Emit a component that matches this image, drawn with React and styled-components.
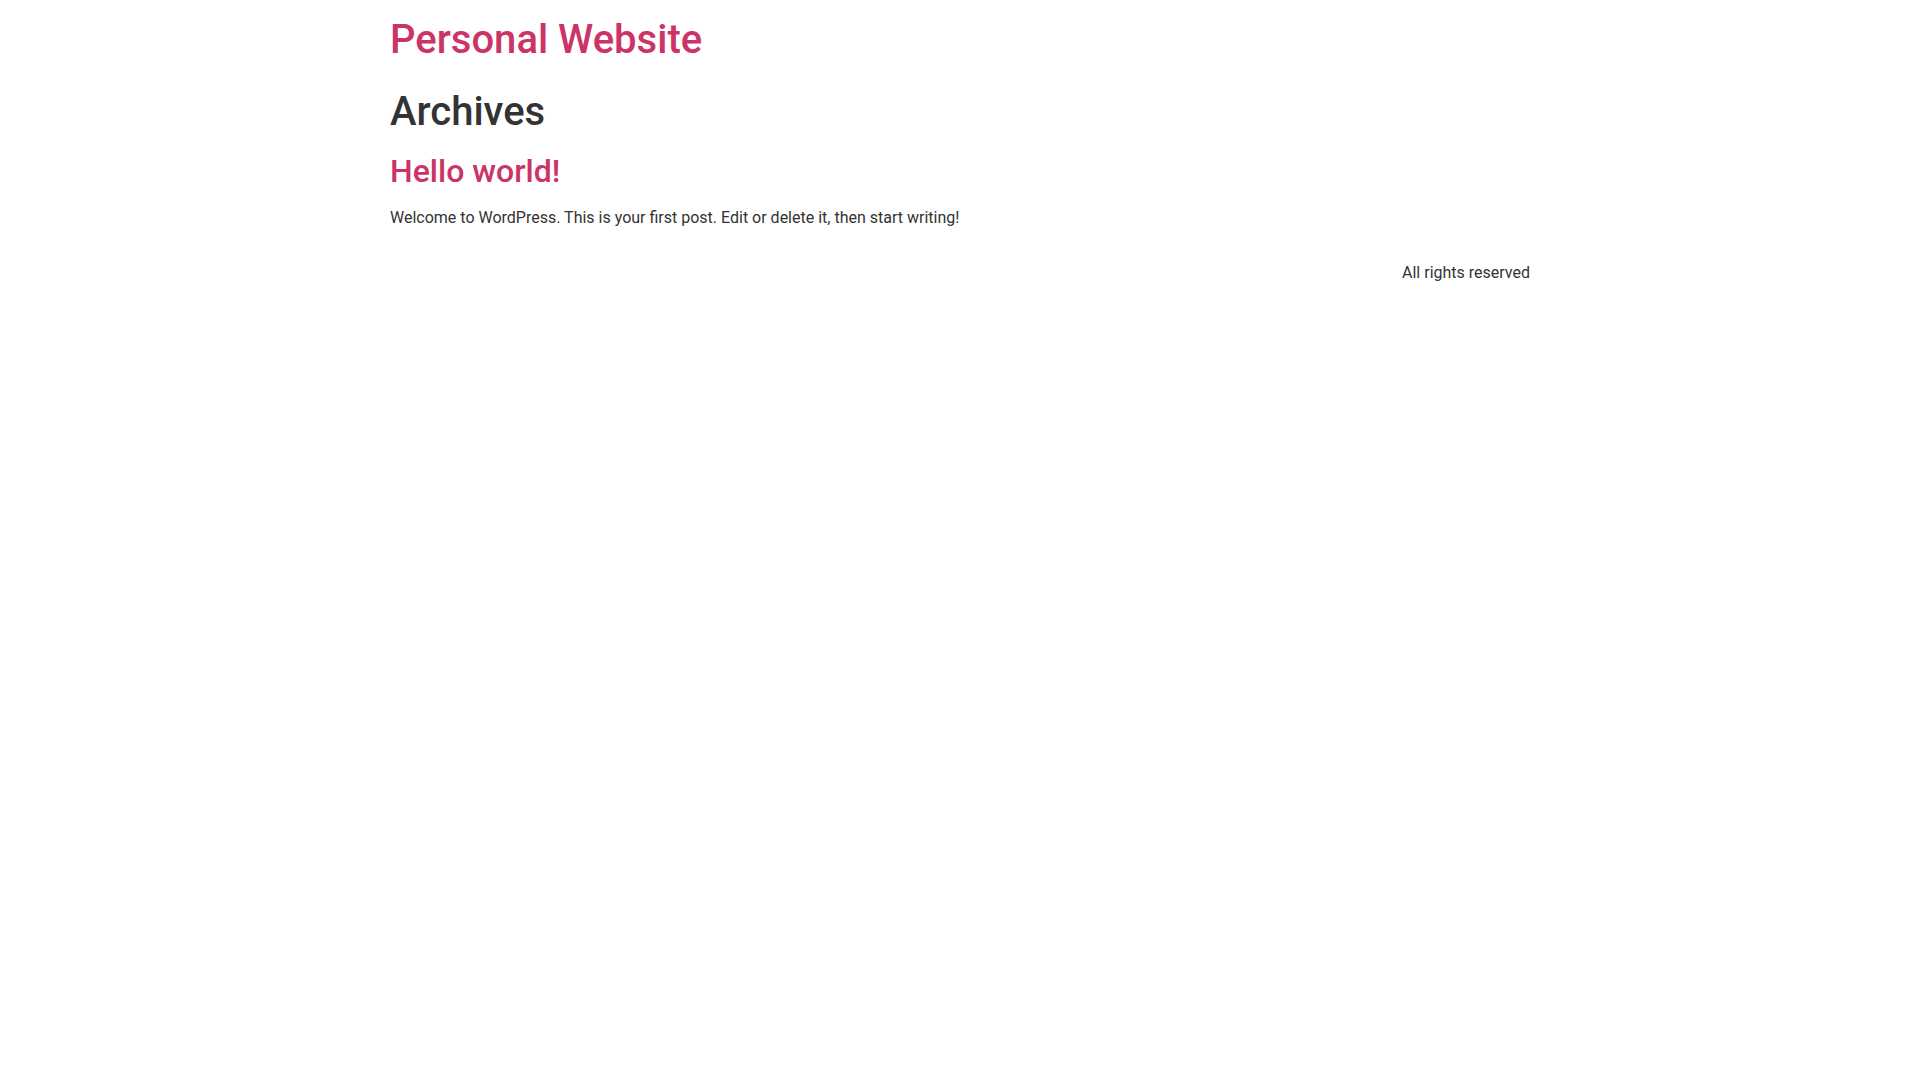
import React from "react";
import styled, { createGlobalStyle } from "styled-components";

const Global = createGlobalStyle`
  html, body { margin: 0; padding: 0; background: #fff; }
  body {
    font-family: Roboto, "Liberation Sans", sans-serif;
    font-size: 16px;
    line-height: 1.5;
    color: #333;
    -webkit-font-smoothing: antialiased;
  }
  * { box-sizing: border-box; }
`;

const Container = styled.div`
  max-width: 1140px;
  margin: 0 auto;
`;

const Header = styled.header`
  display: flex;
  justify-content: space-between;
  padding: 16px 0;
`;

const SiteTitle = styled.h1`
  margin: 0;
  font-size: 40px;
  font-weight: 500;
  line-height: 1.2;
  a { color: #c36; text-decoration: none; }
`;

const Main = styled.main``;

const PageTitle = styled.h1`
  margin: 8px 0 16px;
  font-size: 40px;
  font-weight: 500;
  line-height: 1.2;
  color: #333;
`;

const Article = styled.article``;

const PostTitle = styled.h2`
  margin: 16px 0 16px;
  font-size: 32px;
  font-weight: 500;
  line-height: 1.2;
  a { color: #c36; text-decoration: none; }
`;

const Excerpt = styled.p`
  margin: 0 0 14.4px;
`;

const Footer = styled.footer`
  display: flex;
  justify-content: flex-end;
  padding: 16px 0;
`;

const Copyright = styled.p`
  margin: 0;
`;

export default function App() {
  return (
    <>
      <Global />
      <Container>
        <Header>
          <SiteTitle>
            <a href="#">Personal Website</a>
          </SiteTitle>
        </Header>
        <Main>
          <PageTitle>Archives</PageTitle>
          <Article>
            <PostTitle>
              <a href="#">Hello world!</a>
            </PostTitle>
            <Excerpt>
              Welcome to WordPress. This is your first post. Edit or delete it, then start writing!
            </Excerpt>
          </Article>
        </Main>
        <Footer>
          <Copyright>All rights reserved</Copyright>
        </Footer>
      </Container>
    </>
  );
}
